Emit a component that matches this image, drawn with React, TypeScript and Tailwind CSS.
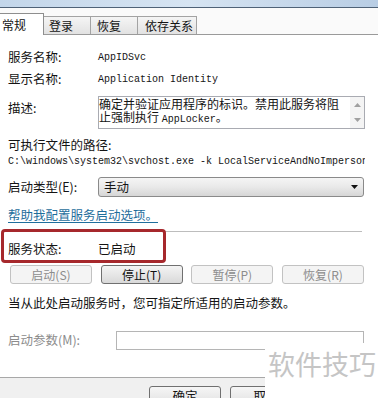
function ActionButton({ label, enabled }: { label: string; enabled?: boolean }) {
  return (
    <div
      className={
        enabled
          ? "w-[82px] h-[19px] rounded-[3px] border border-[#707070] bg-gradient-to-b from-[#f4f4f4] to-[#d9d9d9] text-center leading-[17px] text-[#111]"
          : "w-[82px] h-[19px] rounded-[3px] border border-[#c2c2c2] bg-[#f4f4f4] text-center leading-[17px] text-[#8c8c8c]"
      }
    >
      {label}
    </div>
  )
}

export default function App() {
  return (
    <div className="relative w-[378px] h-[398px] overflow-hidden bg-white font-['Noto_Sans_CJK_SC',sans-serif] text-[12.5px] text-[#141414]">
      {/* window title strip */}
      <div className="h-[8px] bg-gradient-to-r from-[#c3d6ea] via-[#d6e4f2] to-[#b8cde4] border-b border-[#4f6277]" />

      {/* tabs */}
      <div className="flex items-end h-[27px] bg-[#fafafa] border-b border-[#9a9a9a] text-[12px]">
        <div className="-mb-px h-[22px] w-[44px] bg-white border-t border-r border-[#8e8e8e] pl-[2px] pt-[3px] leading-[16px]">
          常规
        </div>
        <div className="h-[18px] w-[47px] bg-gradient-to-b from-[#f5f5f5] to-[#e2e2e2] border-t border-r border-[#a3a3a3] pl-[5px] leading-[17px]">
          登录
        </div>
        <div className="h-[18px] w-[47px] bg-gradient-to-b from-[#f5f5f5] to-[#e2e2e2] border-t border-r border-[#a3a3a3] pl-[6px] leading-[17px]">
          恢复
        </div>
        <div className="h-[18px] w-[59px] bg-gradient-to-b from-[#f5f5f5] to-[#e2e2e2] border-t border-r border-[#a3a3a3] pl-[7px] leading-[17px]">
          依存关系
        </div>
      </div>

      {/* general page */}
      <div className="pl-[8px]">
        <div className="mt-[12px] flex h-[20px] items-center">
          <span className="w-[90px]">服务名称:</span>
          <span className="font-['Liberation_Mono',monospace] text-[10px]">AppIDSvc</span>
        </div>
        <div className="mt-[2px] flex h-[20px] items-center">
          <span className="w-[90px]">显示名称:</span>
          <span className="font-['Liberation_Mono',monospace] text-[10px]">Application Identity</span>
        </div>

        <div className="mt-[7px] flex">
          <span className="w-[90px] pt-[4px] leading-[16px]">描述:</span>
          <div className="flex h-[33px] w-[267px] border border-[#a9abb2]">
            <div className="flex-1 text-[12px] leading-[13px]">
              <div className="whitespace-nowrap">确定并验证应用程序的标识。禁用此服务将阻</div>
              <div className="whitespace-nowrap">
                止强制执行 <span className="font-['Liberation_Mono',monospace] text-[10px]">AppLocker</span>。
              </div>
            </div>
            <div className="flex w-[14px] flex-col items-center justify-between bg-[#f4f4f4] py-[6px]">
              <svg width="7" height="4" viewBox="0 0 7 4">
                <path d="M0 4 L3.5 0 L7 4 Z" fill="#a0a0a0" />
              </svg>
              <svg width="7" height="4" viewBox="0 0 7 4">
                <path d="M0 0 L3.5 4 L7 0 Z" fill="#a0a0a0" />
              </svg>
            </div>
          </div>
        </div>

        <div className="mt-[8px] h-[16px] leading-[16px]">可执行文件的路径:</div>
        <div className="mt-[1px] h-[16px] w-[357px] overflow-hidden whitespace-nowrap leading-[16px] font-['Liberation_Mono',monospace] text-[10px]">
          {"C:\\windows\\system32\\svchost.exe -k LocalServiceAndNoImpersonation"}
        </div>

        <div className="mt-[7px] flex h-[20px] items-center">
          <span className="w-[90px]">启动类型(E):</span>
          <div className="flex h-[20px] w-[266px] items-center justify-between rounded-[3px] border border-[#8a8a8a] bg-gradient-to-b from-[#f5f5f5] via-[#e9e9e9] to-[#d6d6d6] pl-[5px] pr-[5px]">
            <span className="leading-[16px]">手动</span>
            <svg width="7" height="4" viewBox="0 0 7 4">
              <path d="M0 0 L3.5 4 L7 0 Z" fill="#111" />
            </svg>
          </div>
        </div>

        <div className="mt-[10px] h-[16px] leading-[16px]">
          <span className="text-[#1f6e9c] underline underline-offset-2">帮助我配置服务启动选项。</span>
        </div>

        <div className="mt-[8px] h-px w-[354px] bg-[#bdbdbd]" />

        <div className="mt-[9px] flex h-[16px] items-center leading-[16px]">
          <span className="w-[90px]">服务状态:</span>
          <span>已启动</span>
        </div>

        <div className="mt-[8px] ml-[2px] flex w-[354px] justify-between text-[12px]">
          <ActionButton label="启动(S)" />
          <ActionButton label="停止(T)" enabled />
          <ActionButton label="暂停(P)" />
          <ActionButton label="恢复(R)" />
        </div>

        <div className="mt-[11px] h-[16px] leading-[16px] whitespace-nowrap">当从此处启动服务时，您可指定所适用的启动参数。</div>

        <div className="mt-[20px] flex h-[19px] items-center">
          <span className="w-[108px] text-[#8c8c8c]">启动参数(M):</span>
          <div className="h-[19px] w-[248px] border border-[#b5b5b5] bg-white" />
        </div>
      </div>

      <div className="mt-[27px] h-px bg-[#a8a8a8]" />

      {/* dialog buttons */}
      <div className="flex h-[22px] bg-[#f0f0f0] pt-[8px]">
        <div className="ml-[149px] h-[22px] w-[72px] rounded-[3px] border border-[#707070] bg-gradient-to-b from-[#f6f6f6] to-[#dedede] text-center leading-[18px]">
          确定
        </div>
        <div className="ml-[9px] h-[22px] w-[72px] rounded-[3px] border border-[#707070] bg-gradient-to-b from-[#f6f6f6] to-[#dedede] text-center leading-[18px]">
          取消
        </div>
      </div>

      {/* highlight annotation */}
      <div className="absolute left-[1px] top-[229px] h-[34px] w-[165px] rounded-[4px] border-[3px] border-[#a6282c]" />

      {/* watermark */}
      <div className="absolute left-[265px] top-[343px] right-0 bottom-0 bg-white pl-[3px] pt-[7px] text-[27px] leading-none text-[#c5c5c5] whitespace-nowrap">
        软件技巧
      </div>
    </div>
  )
}
